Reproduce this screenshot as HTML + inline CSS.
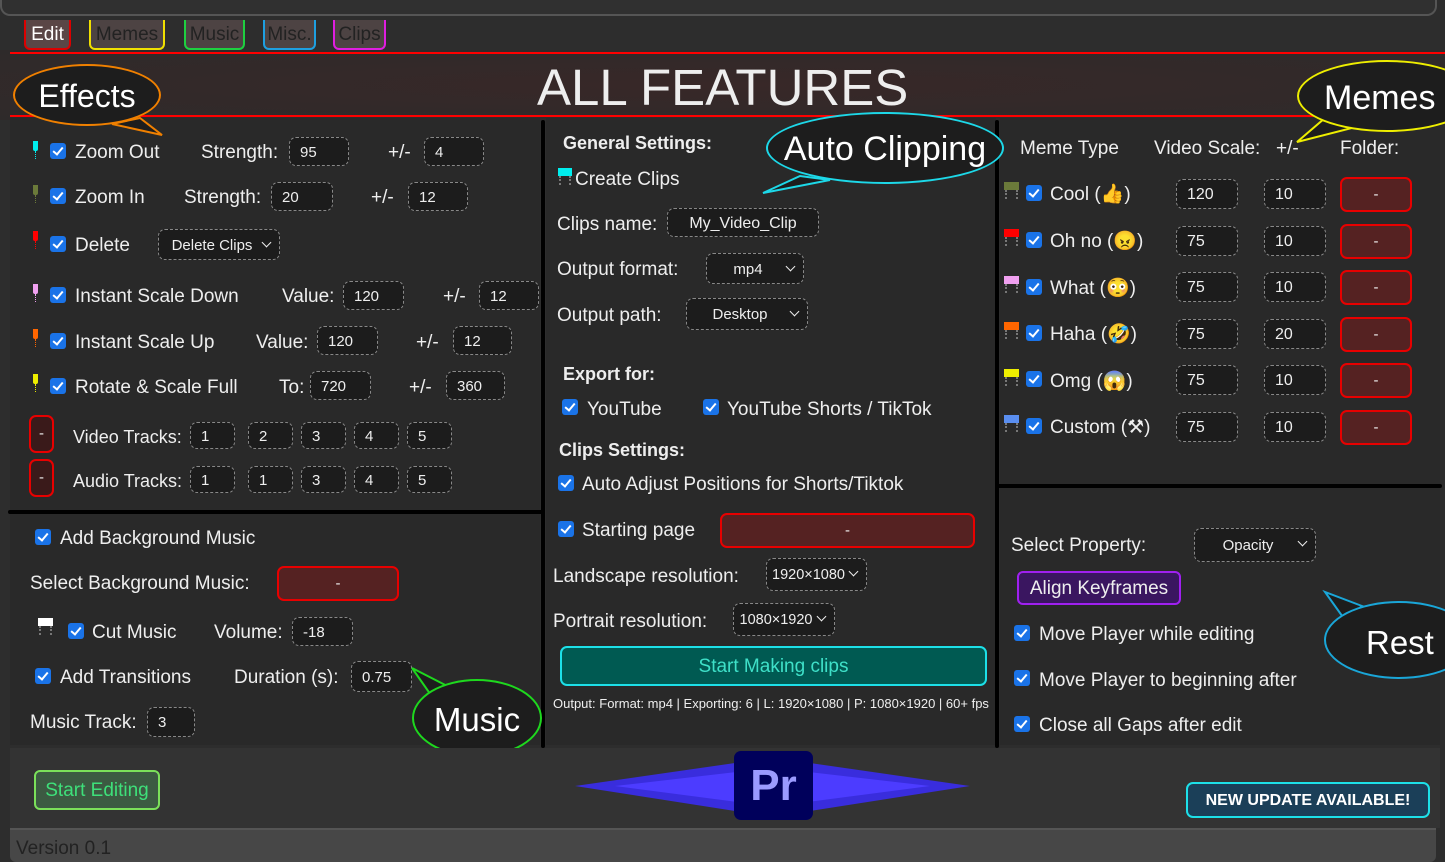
<!DOCTYPE html>
<html><head><meta charset="utf-8"><style>
*{margin:0;padding:0;box-sizing:border-box}
body{width:1445px;height:862px;overflow:hidden;background:#2d2d2d;font-family:"Liberation Sans","Noto Sans CJK JP",sans-serif;position:relative;color:#eee}
.a{position:absolute}
.t{position:absolute;color:#eee;font-size:19px;white-space:nowrap;line-height:22px;margin-top:2px}
.b{font-weight:bold}
.in{position:absolute;background:#1c1c1c;border:1px dashed #888;border-radius:7px;color:#eee;font-size:15px;height:29px;line-height:29px;padding-left:10px;white-space:nowrap}
.sel{text-align:center;padding-left:0;padding-right:14px}
.sel:after{content:"";position:absolute;right:9px;top:9px;width:6px;height:6px;border-right:1.5px solid #eee;border-bottom:1.5px solid #eee;transform:rotate(45deg)}
.cb{position:absolute;width:16px;height:16px;background:#1a73e8;border-radius:3px}
.cb:after{content:"";position:absolute;left:5px;top:2px;width:4px;height:8px;border-right:2.5px solid #fff;border-bottom:2.5px solid #fff;transform:rotate(40deg)}
.red{position:absolute;background:#552222;border:2px solid #e80000;border-radius:7px;color:#eee;text-align:center;font-size:15px}
.mk{position:absolute;width:5px;height:10px;border-radius:0 0 2px 2px}
.mk:after{content:"";position:absolute;left:2px;top:10px;height:8px;border-left:1px dotted currentColor}
.fl{position:absolute;width:15px;height:8px}
.fl:before,.fl:after{content:"";position:absolute;top:8px;height:9px;border-left:2px dotted #777}
.fl:before{left:1px}.fl:after{right:1px}
.tab{position:absolute;top:20px;height:30px;border:2px solid;border-top:none;border-radius:0 0 6px 6px;background:#4d4343;color:#222;font-size:19px;line-height:30px;text-align:center}
.bub{position:absolute;border:2px solid;border-radius:50%;background:#1d1d1d;color:#fff;text-align:center}
.vl{position:absolute;background:#000;border-radius:2px}
</style></head><body>
<div class="a" style="left:0;top:0;width:1437px;height:16px;background:#303030;border:2px solid #555;border-top:none;border-radius:0 0 10px 10px"></div>
<div class="a" style="left:0;top:50px;width:1445px;height:70px;background:radial-gradient(ellipse at 50% 50%,#382828,#2e2a2a)"></div>
<div class="tab" style="left:24px;width:47px;border-color:#d00;color:#fff;background:#5a4646">Edit</div>
<div class="tab" style="left:89px;width:76px;border-color:#f0e000">Memes</div>
<div class="tab" style="left:184px;width:61px;border-color:#1ed040">Music</div>
<div class="tab" style="left:263px;width:53px;border-color:#1e9fe0">Misc.</div>
<div class="tab" style="left:333px;width:53px;border-color:#e01ee0">Clips</div>
<div class="a" style="left:10px;top:52px;width:1435px;height:2px;background:#f00"></div>
<div class="a" style="left:10px;top:115px;width:1435px;height:2px;background:#f00"></div>
<div class="t" style="left:537px;top:58px;font-size:51px;line-height:56px;letter-spacing:0px">ALL FEATURES</div>

<div class="a" style="left:10px;top:118px;width:530px;height:627px;background:#292929"></div>
<div class="a" style="left:546px;top:118px;width:450px;height:627px;background:#292929"></div>
<div class="a" style="left:1000px;top:118px;width:440px;height:627px;background:#292929"></div>
<div class="vl" style="left:8px;top:510px;width:535px;height:4px"></div>
<div class="vl" style="left:541px;top:120px;width:4px;height:628px"></div>
<div class="vl" style="left:995px;top:120px;width:4px;height:628px"></div>
<div class="vl" style="left:997px;top:484px;width:445px;height:4px"></div>

<div class="mk" style="left:33px;top:141px;background:#0ee;color:#0ee"></div>
<div class="cb" style="left:50px;top:143px"></div><div class="t" style="left:75px;top:140px">Zoom Out</div>
<div class="t" style="left:201px;top:140px">Strength:</div><div class="in" style="left:289px;top:137px;width:60px">95</div>
<div class="t" style="left:388px;top:140px">+/-</div><div class="in" style="left:424px;top:137px;width:60px">4</div>

<div class="mk" style="left:33px;top:185px;background:#6b7a3a;color:#6b7a3a"></div>
<div class="cb" style="left:50px;top:188px"></div><div class="t" style="left:75px;top:185px">Zoom In</div>
<div class="t" style="left:184px;top:185px">Strength:</div><div class="in" style="left:271px;top:182px;width:62px">20</div>
<div class="t" style="left:371px;top:185px">+/-</div><div class="in" style="left:408px;top:182px;width:60px">12</div>

<div class="mk" style="left:33px;top:231px;background:#f00;color:#f00"></div>
<div class="cb" style="left:50px;top:236px"></div><div class="t" style="left:75px;top:233px">Delete</div>
<div class="in sel" style="left:158px;top:229px;width:122px;height:31px;line-height:31px">Delete Clips</div>

<div class="mk" style="left:33px;top:284px;background:#f0a0f0;color:#f0a0f0"></div>
<div class="cb" style="left:50px;top:287px"></div><div class="t" style="left:75px;top:284px">Instant Scale Down</div>
<div class="t" style="left:282px;top:284px">Value:</div><div class="in" style="left:343px;top:281px;width:61px">120</div>
<div class="t" style="left:443px;top:284px">+/-</div><div class="in" style="left:479px;top:281px;width:60px">12</div>

<div class="mk" style="left:33px;top:329px;background:#f60;color:#f60"></div>
<div class="cb" style="left:50px;top:333px"></div><div class="t" style="left:75px;top:330px">Instant Scale Up</div>
<div class="t" style="left:256px;top:330px">Value:</div><div class="in" style="left:317px;top:326px;width:61px">120</div>
<div class="t" style="left:416px;top:330px">+/-</div><div class="in" style="left:453px;top:326px;width:59px">12</div>

<div class="mk" style="left:33px;top:374px;background:#ee0;color:#ee0"></div>
<div class="cb" style="left:50px;top:378px"></div><div class="t" style="left:75px;top:375px">Rotate &amp; Scale Full</div>
<div class="t" style="left:279px;top:375px">To:</div><div class="in" style="left:310px;top:371px;width:61px">720</div>
<div class="t" style="left:409px;top:375px">+/-</div><div class="in" style="left:446px;top:371px;width:59px">360</div>

<div class="red" style="left:29px;top:415px;width:25px;height:38px;line-height:34px;background:#3a1a1a">-</div>
<div class="t" style="left:73px;top:424px;font-size:18px">Video Tracks:</div>
<div class="in" style="left:190px;top:422px;width:45px;height:27px;line-height:27px">1</div>
<div class="in" style="left:248px;top:422px;width:45px;height:27px;line-height:27px">2</div>
<div class="in" style="left:301px;top:422px;width:45px;height:27px;line-height:27px">3</div>
<div class="in" style="left:354px;top:422px;width:45px;height:27px;line-height:27px">4</div>
<div class="in" style="left:407px;top:422px;width:45px;height:27px;line-height:27px">5</div>
<div class="red" style="left:29px;top:459px;width:25px;height:38px;line-height:34px;background:#3a1a1a">-</div>
<div class="t" style="left:73px;top:468px;font-size:18px">Audio Tracks:</div>
<div class="in" style="left:190px;top:466px;width:45px;height:27px;line-height:27px">1</div>
<div class="in" style="left:248px;top:466px;width:45px;height:27px;line-height:27px">1</div>
<div class="in" style="left:301px;top:466px;width:45px;height:27px;line-height:27px">3</div>
<div class="in" style="left:354px;top:466px;width:45px;height:27px;line-height:27px">4</div>
<div class="in" style="left:407px;top:466px;width:45px;height:27px;line-height:27px">5</div>

<div class="cb" style="left:35px;top:529px"></div><div class="t" style="left:60px;top:526px">Add Background Music</div>
<div class="t" style="left:30px;top:571px">Select Background Music:</div>
<div class="red" style="left:277px;top:566px;width:122px;height:35px;line-height:31px">-</div>
<div class="fl" style="left:38px;top:618px;background:#fff"></div>
<div class="cb" style="left:68px;top:623px"></div><div class="t" style="left:92px;top:620px">Cut Music</div>
<div class="t" style="left:214px;top:620px">Volume:</div><div class="in" style="left:292px;top:617px;width:61px">-18</div>
<div class="cb" style="left:35px;top:668px"></div><div class="t" style="left:60px;top:665px">Add Transitions</div>
<div class="t" style="left:234px;top:665px">Duration (s):</div><div class="in" style="left:351px;top:661px;width:61px;height:31px;line-height:31px">0.75</div>
<div class="t" style="left:30px;top:710px">Music Track:</div><div class="in" style="left:147px;top:707px;width:48px;height:30px;line-height:30px">3</div>

<div class="t b" style="left:563px;top:130px;font-size:18px">General Settings:</div>
<div class="fl" style="left:558px;top:168px;background:#0ee;width:14px"></div>
<div class="t" style="left:575px;top:167px">Create Clips</div>
<div class="t" style="left:557px;top:212px">Clips name:</div><div class="in" style="left:667px;top:208px;width:152px;text-align:center;padding:0;font-size:16px">My_Video_Clip</div>
<div class="t" style="left:557px;top:257px">Output format:</div><div class="in sel" style="left:706px;top:253px;width:98px;height:31px;line-height:31px">mp4</div>
<div class="t" style="left:557px;top:303px">Output path:</div><div class="in sel" style="left:686px;top:298px;width:122px;height:32px;line-height:32px">Desktop</div>
<div class="t b" style="left:563px;top:361px;font-size:18px">Export for:</div>
<div class="cb" style="left:562px;top:399px"></div><div class="t" style="left:587px;top:397px">YouTube</div>
<div class="cb" style="left:703px;top:399px"></div><div class="t" style="left:727px;top:397px">YouTube Shorts / TikTok</div>
<div class="t b" style="left:559px;top:437px;font-size:18px">Clips Settings:</div>
<div class="cb" style="left:558px;top:475px"></div><div class="t" style="left:582px;top:472px">Auto Adjust Positions for Shorts/Tiktok</div>
<div class="cb" style="left:558px;top:521px"></div><div class="t" style="left:582px;top:518px">Starting page</div>
<div class="red" style="left:720px;top:513px;width:255px;height:35px;line-height:31px">-</div>
<div class="t" style="left:553px;top:564px">Landscape resolution:</div><div class="in sel" style="left:766px;top:558px;width:101px;height:33px;line-height:33px;font-size:14.5px;padding-right:16px">1920×1080</div>
<div class="t" style="left:553px;top:609px">Portrait resolution:</div><div class="in sel" style="left:733px;top:603px;width:102px;height:33px;line-height:33px;font-size:14.5px;padding-right:16px">1080×1920</div>
<div class="a" style="left:560px;top:646px;width:427px;height:40px;background:#005a52;border:2px solid #1de0e8;border-radius:7px;color:#3ee0c8;font-size:19px;text-align:center;line-height:38px">Start Making clips</div>
<div class="t" style="left:553px;top:693px;font-size:13px;line-height:18px">Output: Format: mp4 | Exporting: 6 | L: 1920×1080 | P: 1080×1920 | 60+ fps</div>

<div class="t" style="left:1020px;top:136px">Meme Type</div>
<div class="t" style="left:1154px;top:136px">Video Scale:</div>
<div class="t" style="left:1276px;top:136px">+/-</div>
<div class="t" style="left:1340px;top:136px">Folder:</div>

<div class="fl" style="left:1004px;top:182px;background:#6b7a3a"></div><div class="cb" style="left:1026px;top:185px"></div><div class="t" style="left:1050px;top:182px">Cool (👍)</div>
<div class="in" style="left:1176px;top:179px;width:62px;height:30px;line-height:30px;font-size:16px">120</div><div class="in" style="left:1264px;top:179px;width:62px;height:30px;line-height:30px;font-size:16px">10</div><div class="red" style="left:1340px;top:177px;width:72px;height:35px;line-height:31px">-</div>

<div class="fl" style="left:1004px;top:229px;background:#f00"></div><div class="cb" style="left:1026px;top:232px"></div><div class="t" style="left:1050px;top:229px">Oh no (😠)</div>
<div class="in" style="left:1176px;top:226px;width:62px;height:30px;line-height:30px;font-size:16px">75</div><div class="in" style="left:1264px;top:226px;width:62px;height:30px;line-height:30px;font-size:16px">10</div><div class="red" style="left:1340px;top:224px;width:72px;height:35px;line-height:31px">-</div>

<div class="fl" style="left:1004px;top:276px;background:#f0a0f0"></div><div class="cb" style="left:1026px;top:279px"></div><div class="t" style="left:1050px;top:276px">What (😳)</div>
<div class="in" style="left:1176px;top:272px;width:62px;height:30px;line-height:30px;font-size:16px">75</div><div class="in" style="left:1264px;top:272px;width:62px;height:30px;line-height:30px;font-size:16px">10</div><div class="red" style="left:1340px;top:270px;width:72px;height:35px;line-height:31px">-</div>

<div class="fl" style="left:1004px;top:322px;background:#f60"></div><div class="cb" style="left:1026px;top:325px"></div><div class="t" style="left:1050px;top:322px">Haha (🤣)</div>
<div class="in" style="left:1176px;top:319px;width:62px;height:30px;line-height:30px;font-size:16px">75</div><div class="in" style="left:1264px;top:319px;width:62px;height:30px;line-height:30px;font-size:16px">20</div><div class="red" style="left:1340px;top:317px;width:72px;height:35px;line-height:31px">-</div>

<div class="fl" style="left:1004px;top:369px;background:#ee0"></div><div class="cb" style="left:1026px;top:371px"></div><div class="t" style="left:1050px;top:369px">Omg (😱)</div>
<div class="in" style="left:1176px;top:365px;width:62px;height:30px;line-height:30px;font-size:16px">75</div><div class="in" style="left:1264px;top:365px;width:62px;height:30px;line-height:30px;font-size:16px">10</div><div class="red" style="left:1340px;top:363px;width:72px;height:35px;line-height:31px">-</div>

<div class="fl" style="left:1004px;top:415px;background:#5a8ef0"></div><div class="cb" style="left:1026px;top:418px"></div><div class="t" style="left:1050px;top:415px">Custom (⚒)</div>
<div class="in" style="left:1176px;top:412px;width:62px;height:30px;line-height:30px;font-size:16px">75</div><div class="in" style="left:1264px;top:412px;width:62px;height:30px;line-height:30px;font-size:16px">10</div><div class="red" style="left:1340px;top:410px;width:72px;height:35px;line-height:31px">-</div>

<div class="t" style="left:1011px;top:533px">Select Property:</div>
<div class="in sel" style="left:1194px;top:528px;width:122px;height:34px;line-height:34px">Opacity</div>
<div class="a" style="left:1017px;top:571px;width:164px;height:34px;background:#3a1660;border:2px solid #a020f0;border-radius:6px;color:#eee;font-size:19px;text-align:center;line-height:32px">Align Keyframes</div>
<div class="cb" style="left:1014px;top:625px"></div><div class="t" style="left:1039px;top:622px">Move Player while editing</div>
<div class="cb" style="left:1014px;top:670px"></div><div class="t" style="left:1039px;top:668px">Move Player to beginning after</div>
<div class="cb" style="left:1014px;top:716px"></div><div class="t" style="left:1039px;top:713px">Close all Gaps after edit</div>

<svg class="a" style="left:0;top:0" width="1445" height="862">
<path d="M140,118 L162,135 L112,124 Z" fill="#1d1d1d" stroke="#f08000" stroke-width="2"/>
<path d="M800,176 L763,193 L830,180 Z" fill="#1d1d1d" stroke="#1dd8e8" stroke-width="2"/>
<path d="M1325,118 L1297,142 L1352,128 Z" fill="#1d1d1d" stroke="#ee0" stroke-width="2"/>
<path d="M455,690 L412,668 L440,708 Z" fill="#1d1d1d" stroke="#1ed81e" stroke-width="2"/>
<path d="M1362,606 L1325,592 L1345,620 Z" fill="#1d1d1d" stroke="#1aa6d8" stroke-width="2"/>
</svg>
<div class="bub" style="left:13px;top:64px;width:148px;height:62px;border-color:#f08000;font-size:32px;line-height:60px">Effects</div>
<div class="bub" style="left:766px;top:112px;width:238px;height:72px;border-color:#1dd8e8;font-size:34px;line-height:70px">Auto Clipping</div>
<div class="bub" style="left:1297px;top:60px;width:180px;height:72px;border-color:#ee0;font-size:34px;line-height:72px;text-align:left;padding-left:25px">Memes</div>
<div class="bub" style="left:412px;top:679px;width:130px;height:78px;border-color:#1ed81e;font-size:33px;line-height:78px">Music</div>
<div class="bub" style="left:1324px;top:601px;width:150px;height:78px;border-color:#1aa6d8;font-size:33px;line-height:80px;text-align:left;padding-left:40px">Rest</div>

<div class="a" style="left:10px;top:748px;width:1430px;height:80px;background:#333"></div>
<div class="a" style="left:34px;top:770px;width:126px;height:40px;background:#3c5a42;border:2px solid #7be05a;border-radius:6px;color:#3ee07a;font-size:19px;text-align:center;line-height:38px">Start Editing</div>
<svg class="a" style="left:575px;top:755px" width="395" height="64"><polygon points="0,31 160,8 235,8 395,31 235,56 160,56" fill="#3a2cf0" opacity="0.9"/><polygon points="40,31 170,16 225,16 355,31 225,48 170,48" fill="#4c3cff"/></svg>
<div class="a" style="left:734px;top:751px;width:79px;height:69px;background:#00005b;border-radius:7px;color:#9a9aff;font-weight:bold;font-size:44px;text-align:center;line-height:69px">Pr</div>
<div class="a" style="left:1186px;top:782px;width:244px;height:36px;background:#1b3f58;border:2px solid #1de0e8;border-radius:7px;color:#fff;font-size:16px;font-weight:bold;text-align:center;line-height:34px">NEW UPDATE AVAILABLE!</div>
<div class="a" style="left:10px;top:828px;width:1426px;height:34px;background:#474747;border-top:2px solid #555;border-radius:0 0 6px 6px"></div>
<div class="t" style="left:16px;top:836px;color:#222;font-size:19px">Version 0.1</div>
</body></html>
